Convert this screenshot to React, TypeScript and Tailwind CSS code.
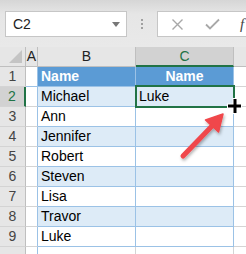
import React from "react"

const names = ["Michael", "Ann", "Jennifer", "Robert", "Steven", "Lisa", "Travor", "Luke"]

function RowHead({ n, active }: { n: number | string; active?: boolean }) {
  return (
    <div
      className={`h-5 flex items-center justify-center text-[14px] border-b border-[#d4d4d4] ${
        active
          ? "bg-[#d2d2d2] text-[#217346] border-r-2 border-r-[#217346]"
          : "bg-[#e6e6e6] text-[#444] border-r border-r-[#bfbfbf]"
      }`}
    >
      {n}
    </div>
  )
}

export default function App() {
  return (
    <div
      className="relative w-[246px] h-[254px] overflow-hidden bg-white"
      style={{ fontFamily: "'Liberation Sans', Arial, sans-serif" }}
    >
      {/* formula bar */}
      <div className="h-[47px] bg-linear-to-b from-[#d6d6d6] via-[#e6e6e6] via-30% to-[#e9e9e9] pt-[11px] pl-[5px] flex items-start">
        <div className="w-[122px] h-[26px] bg-white border border-[#c6c6c6] flex items-center pl-[7px] pr-[6px] text-[14px] text-[#222]">
          <span className="flex-1">C2</span>
          <span className="w-0 h-0 border-l-[4px] border-r-[4px] border-t-[5px] border-l-transparent border-r-transparent border-t-[#777]" />
        </div>
        <div className="w-[30px] h-[26px] flex flex-col items-center justify-center gap-[2px]">
          <span className="w-[2px] h-[2px] bg-[#a0a0a0]" />
          <span className="w-[2px] h-[2px] bg-[#a0a0a0]" />
          <span className="w-[2px] h-[2px] bg-[#a0a0a0]" />
        </div>
        <div className="flex-1 h-[26px] bg-white border border-[#c6c6c6] border-r-0 flex items-center pl-[13px]">
          <svg width="13" height="13" viewBox="0 0 13 13" className="mr-[21px]">
            <path d="M1.5 1.5 L11.5 11.5 M11.5 1.5 L1.5 11.5" stroke="#a8a8a8" strokeWidth="1.4" fill="none" />
          </svg>
          <svg width="15" height="12" viewBox="0 0 15 12" className="mr-[20px]">
            <path d="M1 6.5 L5 10.5 L14 1.5" stroke="#a8a8a8" strokeWidth="1.8" fill="none" />
          </svg>
          <span className="italic text-[15px] text-[#444]" style={{ fontFamily: "'Liberation Serif', serif" }}>
            f
          </span>
        </div>
      </div>

      {/* sheet grid */}
      <div className="grid grid-cols-[26px_12px_98px_98px_1fr] text-[14px]">
        {/* column headers */}
        <div className="relative h-5 bg-[#e6e6e6] border-r border-b border-[#bfbfbf]">
          <svg className="absolute right-[3px] bottom-[3px]" width="13" height="13" viewBox="0 0 13 13">
            <path d="M13 0 L13 13 L0 13 Z" fill="#c4c4c4" />
          </svg>
        </div>
        <div className="h-5 bg-[#e6e6e6] border-r border-b border-[#bfbfbf] flex items-center justify-center text-[#222]">A</div>
        <div className="h-5 bg-[#e6e6e6] border-r border-b border-[#bfbfbf] flex items-center justify-center text-[#222]">B</div>
        <div className="h-5 bg-[#d2d2d2] border-r border-r-[#bfbfbf] border-b-2 border-b-[#217346] flex items-center justify-center text-[#217346]">C</div>
        <div className="h-5 bg-[#e6e6e6] border-b border-[#bfbfbf]" />

        {/* row 1: table header */}
        <RowHead n={1} />
        <div className="h-5 border-r border-b border-[#9bc2e6]" />
        <div className="h-5 bg-[#5b9bd5] border-r border-b border-[#9bc2e6] text-white font-bold flex items-center pl-[3px]">Name</div>
        <div className="h-5 bg-[#5b9bd5] border-r border-b border-[#9bc2e6] text-white font-bold flex items-center justify-center">Name</div>
        <div className="h-5 border-b border-[#d4d4d4]" />

        {names.map((name, i) => {
          const band = i % 2 === 0
          return (
            <React.Fragment key={i}>
              <RowHead n={i + 2} active={i === 0} />
              <div className="h-5 border-r border-r-[#9bc2e6] border-b border-b-[#d4d4d4]" />
              <div className={`h-5 border-r border-b border-[#9bc2e6] flex items-center pl-[3px] text-black ${band ? "bg-[#ddebf7]" : ""}`}>
                {name}
              </div>
              <div className={`h-5 border-r border-b border-[#9bc2e6] flex items-center pl-[3px] text-black ${band ? "bg-[#ddebf7]" : ""}`}>
                {i === 0 ? "Luke" : ""}
              </div>
              <div className="h-5 border-b border-[#d4d4d4]" />
            </React.Fragment>
          )
        })}

        <div className="h-[7px] bg-[#e6e6e6] border-r border-[#bfbfbf]" />
        <div className="h-[7px] border-r border-[#9bc2e6]" />
        <div className="h-[7px] border-r border-[#d4d4d4]" />
        <div className="h-[7px] border-r border-[#d4d4d4]" />
        <div className="h-[7px]" />
      </div>

      {/* selection box on C2 */}
      <div className="absolute left-[135px] top-[85px] w-[100px] h-[23px] border-2 border-[#217346]" />

      {/* arrow + fill cursor */}
      <svg className="absolute left-0 top-0 pointer-events-none" width="246" height="254" viewBox="0 0 246 254">
        <defs>
          <filter id="sh" x="-20%" y="-20%" width="140%" height="140%">
            <feDropShadow dx="1" dy="2" stdDeviation="1.5" floodColor="#000" floodOpacity="0.3" />
          </filter>
        </defs>
        <g filter="url(#sh)">
          <line x1="183" y1="156" x2="213" y2="125" stroke="#f0474b" strokeWidth="5" strokeLinecap="round" />
          <polygon points="223,114 218.5,132 205.5,120" fill="#f0474b" stroke="#f0474b" strokeWidth="1.5" strokeLinejoin="round" />
        </g>
        <g>
          <rect x="227" y="103.5" width="15" height="5" fill="#fff" />
          <rect x="232.5" y="98" width="5" height="16" fill="#fff" />
          <rect x="228" y="104.5" width="13" height="3" fill="#000" />
          <rect x="233.5" y="99" width="3" height="14" fill="#000" />
        </g>
      </svg>
    </div>
  )
}
